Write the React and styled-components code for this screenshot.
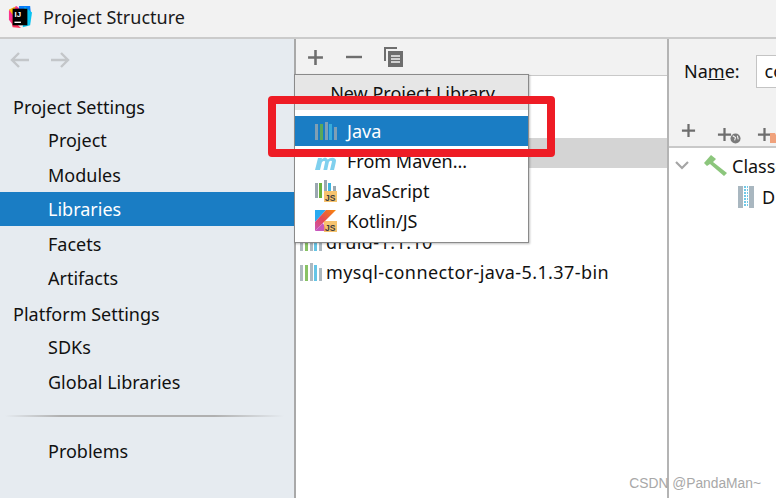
import React from "react";
import styled, {createGlobalStyle} from "styled-components";

const GlobalStyle = createGlobalStyle`
  html, body {
    margin: 0;
    padding: 0;
    background: #fff;
  }
  * {
    box-sizing: border-box;
  }
  svg {
    flex: none;
  }
`;

const sideItems = [
    {label: "Project Settings", head: true},
    {label: "Project"},
    {label: "Modules"},
    {label: "Libraries", active: true},
    {label: "Facets"},
    {label: "Artifacts"},
    {label: "Platform Settings", head: true},
    {label: "SDKs"},
    {label: "Global Libraries"},
];

function LibIcon({dim}) {
    return (
        <svg width="22" height="20" viewBox="0 0 22 20">
            <rect x="0" y="3" width="3" height="16" fill="#9aa7b0" opacity={dim ? 0.8 : 1}/>
            <rect x="5" y="3" width="3" height="16" fill="#6cb33f" opacity={dim ? 0.8 : 1}/>
            <rect x="10" y="1" width="3" height="18" fill="#9aa7b0" opacity={dim ? 0.8 : 1}/>
            <rect x="14" y="3" width="3" height="16" fill="#40b6e0" opacity={dim ? 0.8 : 1}/>
            <rect x="19" y="6" width="3" height="13" fill="#9aa7b0" opacity={dim ? 0.8 : 1}/>
        </svg>
    );
}

function JsBadge() {
    return (
        <>
            <rect x="9" y="11" width="13" height="11" fill="#f4af3d" opacity="0.75"/>
            <text x="10" y="20.5" fontSize="8.5" fontWeight="700" fontFamily="Liberation Sans, sans-serif" fill="#3c3c3c">JS</text>
        </>
    );
}

function JsLibIcon() {
    return (
        <svg width="22" height="22" viewBox="0 0 22 22">
            <rect x="0" y="3" width="3" height="15" fill="#9aa7b0"/>
            <rect x="4" y="3" width="3" height="15" fill="#6cb33f"/>
            <rect x="9" y="0" width="3" height="11" fill="#9aa7b0"/>
            <rect x="13" y="3" width="3" height="8" fill="#40b6e0"/>
            <rect x="18" y="6" width="3" height="5" fill="#9aa7b0"/>
            <JsBadge/>
        </svg>
    );
}

function KotlinIcon() {
    return (
        <svg width="22" height="22" viewBox="0 0 22 22">
            <defs>
                <linearGradient id="kot" x1="0" y1="1" x2="1" y2="0">
                    <stop offset="0" stopColor="#c757bc"/>
                    <stop offset="0.45" stopColor="#e44857"/>
                    <stop offset="1" stopColor="#f88909"/>
                </linearGradient>
            </defs>
            <path d="M0 0H11L0 12Z" fill="#29a9f0"/>
            <path d="M11 0H21L0 21V12Z" fill="url(#kot)"/>
            <path d="M0 21L8 13L12 21Z" fill="#c757bc"/>
            <JsBadge/>
        </svg>
    );
}

function MavenIcon() {
    return (
        <svg width="22" height="20" viewBox="0 0 22 20">
            <path
                d="M0 19L3 7H7L6.6 8.6C8.4 6.6 11.6 6 12.6 8.6C14.6 6.4 20.6 5.4 21 9.6C21 11 20 15 19 19H15L17 10.6C17 9.4 14.6 9.6 13.8 11.4L12.2 19H8.4L10.2 10.6C10 9.4 7.6 9.8 6.8 11.4L5 19Z"
                fill="#7fd0ee"
            />
        </svg>
    );
}

function Plus({size = 16}) {
    return (
        <svg width={size} height={size} viewBox="0 0 16 16">
            <path d="M8 1V15M1 8H15" stroke="#6e6e6e" strokeWidth="2.4"/>
        </svg>
    );
}

function Minus() {
    return (
        <svg width="16" height="16" viewBox="0 0 16 16">
            <path d="M0 8H16" stroke="#6e6e6e" strokeWidth="2.4"/>
        </svg>
    );
}

function CopyIcon() {
    return (
        <svg width="19" height="20" viewBox="0 0 19 20">
            <path d="M1 14V1H13" stroke="#6e6e6e" strokeWidth="2" fill="none"/>
            <rect x="4" y="4" width="15" height="16" fill="#6e6e6e"/>
            <path d="M7 9H16M7 12H16M7 15H16" stroke="#f2f2f2" strokeWidth="1.4"/>
        </svg>
    );
}

function ArrowIcon({right}) {
    return (
        <svg width="20" height="16" viewBox="0 0 20 16">
            <path
                d={right ? "M1 8H18M11 1L18 8L11 15" : "M19 8H2M9 1L2 8L9 15"}
                stroke="#c3c6c9" strokeWidth="2.4" fill="none"
            />
        </svg>
    );
}

function WebPlus() {
    return (
        <IconSlot>
            <Plus size={15}/>
            <Overlay>
                <svg width="11" height="11" viewBox="0 0 12 12">
                    <circle cx="6" cy="6" r="5.5" fill="#7a7a7a"/>
                    <path d="M3 3L6 5L5 8M8 3L9 7" stroke="#f2f2f2" strokeWidth="1.2" fill="none"/>
                </svg>
            </Overlay>
        </IconSlot>
    );
}

function FolderPlus() {
    return (
        <IconSlot>
            <Plus size={15}/>
            <Overlay>
                <svg width="12" height="10" viewBox="0 0 12 10">
                    <path d="M0 0H5L6 2H12V10H0Z" fill="#f0a27c"/>
                </svg>
            </Overlay>
        </IconSlot>
    );
}

function HammerIcon() {
    return (
        <svg width="24" height="22" viewBox="0 0 24 22">
            <path d="M0 8L7 0L12 4L9 7L23 18L20 21L6 9L3 11Z" fill="#8cc67c"/>
        </svg>
    );
}

function ChevronIcon() {
    return (
        <svg width="14" height="9" viewBox="0 0 14 9">
            <path d="M1 1L7 7L13 1" stroke="#a5a5a5" strokeWidth="2.2" fill="none"/>
        </svg>
    );
}

function JarIcon() {
    return (
        <svg width="16" height="22" viewBox="0 0 16 22">
            <rect x="0" y="0" width="5" height="22" fill="#a9b7c0"/>
            <rect x="11" y="0" width="5" height="22" fill="#a9b7c0"/>
            <path d="M6 1H10M6 4H10M6 7H10M6 10H10M6 13H10M6 16H10M6 19H10" stroke="#40b6e0" strokeWidth="1.6" strokeDasharray="2 1"/>
        </svg>
    );
}

function IdeaLogo() {
    return (
        <svg width="24" height="24" viewBox="0 0 26 26">
            <path d="M1 6L9 1L14 5L4 20L1 16Z" fill="#fc318c"/>
            <path d="M12 1H24L25 12L20 20L12 8Z" fill="#087cfa"/>
            <path d="M18 2L26 8L24 22L16 24Z" fill="#07c3f2"/>
            <path d="M3 14L14 25L5 24Z" fill="#fe315d"/>
            <path d="M1 5L8 2L6 12Z" fill="#fdb60d"/>
            <rect x="5" y="4" width="16" height="18" fill="#000"/>
            <text x="7" y="13" fontSize="8.5" fontWeight="700" fontFamily="Liberation Sans, sans-serif" fill="#fff">IJ</text>
            <rect x="7" y="18" width="7" height="1.5" fill="#fff"/>
        </svg>
    );
}

function App() {
    return (
        <Page>
            <GlobalStyle/>
            <TitleBar>
                <IdeaLogo/>
                <Title>Project Structure</Title>
            </TitleBar>
            <Body>
                <Sidebar>
                    <NavArrows>
                        <ArrowIcon/>
                        <ArrowIcon right/>
                    </NavArrows>
                    <SideList>
                        {sideItems.map((item) => (
                            <SideRow key={item.label} $head={item.head} $active={item.active}>
                                {item.label}
                            </SideRow>
                        ))}
                    </SideList>
                    <SideDivider/>
                    <SideRow>Problems</SideRow>
                </Sidebar>

                <Middle>
                    <Toolbar>
                        <Plus size={17}/>
                        <Minus/>
                        <CopyIcon/>
                    </Toolbar>
                    <LibList>
                        <LibRow/>
                        <LibRow/>
                        <LibRow $selected/>
                        <LibRow/>
                        <LibRow/>
                        <LibRow><LibIcon dim/>druid-1.1.10</LibRow>
                        <LibRow><LibIcon dim/>mysql-connector-java-5.1.37-bin</LibRow>
                    </LibList>
                </Middle>

                <Detail>
                    <NameRow>
                        <NameLabel>Na<u>m</u>e:</NameLabel>
                        <NameInput>co</NameInput>
                    </NameRow>
                    <DetailTools>
                        <Plus size={15}/>
                        <WebPlus/>
                        <FolderPlus/>
                    </DetailTools>
                    <Tree>
                        <TreeRow>
                            <ChevronIcon/>
                            <HammerSlot><HammerIcon/></HammerSlot>
                            Classes
                        </TreeRow>
                        <TreeChild>
                            <JarIcon/>
                            D
                        </TreeChild>
                    </Tree>
                </Detail>
            </Body>

            <Popup>
                <PopupHead>New Project Library</PopupHead>
                <PopupItems>
                    <PopupItem $active><LibIcon dim/>Java</PopupItem>
                    <PopupItem><MavenIcon/>From Maven...</PopupItem>
                    <PopupItem><JsLibIcon/>JavaScript</PopupItem>
                    <PopupItem><KotlinIcon/>Kotlin/JS</PopupItem>
                </PopupItems>
            </Popup>
            <RedMark/>
            <Watermark>CSDN @PandaMan~</Watermark>
        </Page>
    );
}

export default App;

const Page = styled.div`
  position: relative;
  width: 776px;
  height: 498px;
  overflow: hidden;
  display: flex;
  flex-direction: column;
  background: #fff;
  color: #111;
  font-family: "Noto Sans", "Open Sans", sans-serif;
  font-size: 18px;
`;

const TitleBar = styled.div`
  height: 39px;
  flex: none;
  display: flex;
  align-items: center;
  gap: 11px;
  padding: 0 0 4px 8px;
  background: #f2f2f2;
  border-bottom: 2px solid #cbcbcb;
`;

const Title = styled.span`
  font-size: 18px;
  color: #1a1a1a;
`;

const Body = styled.div`
  flex: 1;
  display: flex;
  min-height: 0;
`;

const Sidebar = styled.div`
  width: 296px;
  flex: none;
  display: flex;
  flex-direction: column;
  background: #e6ebf0;
  border-right: 2px solid #a9a9a9;
`;

const NavArrows = styled.div`
  height: 49.4px;
  flex: none;
  display: flex;
  align-items: center;
  gap: 20px;
  padding: 0 0 8px 10px;
`;

const SideList = styled.div`
  display: flex;
  flex-direction: column;
`;

const SideRow = styled.div`
  height: 34.5px;
  display: flex;
  align-items: center;
  padding-left: ${(p) => (p.$head ? "13px" : "48px")};
  padding-top: ${(p) => (p.$head ? "3px" : "0")};
  background: ${(p) => (p.$active ? "#1a7dc4" : "transparent")};
  color: ${(p) => (p.$active ? "#fff" : "#111")};
`;

const SideDivider = styled.div`
  height: 2px;
  flex: none;
  margin: 16.6px 10px 16px 5px;
  background: linear-gradient(90deg, #e6ebf0, #b0b0b0 20%, #b0b0b0 75%, #e6ebf0);
`;

const Middle = styled.div`
  width: 373px;
  flex: none;
  display: flex;
  flex-direction: column;
  border-right: 2px solid #b4b4b4;
`;

const Toolbar = styled.div`
  height: 37px;
  flex: none;
  display: flex;
  align-items: center;
  gap: 22px;
  padding-left: 11px;
  background: #f2f2f2;
  border-bottom: 1px solid #c9c9c9;
`;

const LibList = styled.div`
  padding-top: 2px;
  display: flex;
  flex-direction: column;
`;

const LibRow = styled.div`
  height: 30px;
  display: flex;
  align-items: center;
  gap: 4px;
  padding: 0 0 2px 4px;
  letter-spacing: 0.4px;
  background: ${(p) => (p.$selected ? "#d4d4d4" : "transparent")};
`;

const Detail = styled.div`
  flex: 1;
  min-width: 0;
  display: flex;
  flex-direction: column;
`;

const NameRow = styled.div`
  height: 70px;
  flex: none;
  display: flex;
  align-items: center;
  gap: 16px;
  padding: 0 0 6px 15px;
  background: #f2f2f2;
`;

const NameLabel = styled.span`
  white-space: nowrap;
`;

const NameInput = styled.div`
  width: 60px;
  height: 33px;
  flex: none;
  display: flex;
  align-items: center;
  padding-left: 8px;
  background: #fff;
  border: 1px solid #c4c4c4;
`;

const DetailTools = styled.div`
  height: 39px;
  flex: none;
  display: flex;
  align-items: center;
  gap: 21px;
  padding: 6px 0 0 12px;
  background: #f2f2f2;
  border-bottom: 2px solid #c9c9c9;
`;

const IconSlot = styled.span`
  position: relative;
  width: 19px;
  height: 15px;
  flex: none;
  display: inline-block;
`;

const Overlay = styled.span`
  position: absolute;
  left: 13px;
  top: 10px;
  line-height: 0;
`;

const Tree = styled.div`
  display: flex;
  flex-direction: column;
`;

const TreeRow = styled.div`
  height: 35px;
  display: flex;
  align-items: center;
  padding-left: 6px;
  white-space: nowrap;
`;

const HammerSlot = styled.span`
  flex: none;
  display: flex;
  margin: 0 4px 0 15px;
`;

const TreeChild = styled.div`
  height: 27px;
  display: flex;
  align-items: center;
  gap: 8px;
  padding-left: 69px;
`;

const Popup = styled.div`
  position: absolute;
  left: 294px;
  top: 74px;
  width: 235px;
  height: 169px;
  background: #fff;
  border: 1px solid #8a8a8a;
  box-shadow: 1px 1px 2px rgba(0, 0, 0, 0.25);
`;

const PopupHead = styled.div`
  height: 35px;
  display: flex;
  align-items: center;
  justify-content: center;
  padding: 0 6px 0 8px;
  background: #e6e6e6;
`;

const PopupItems = styled.div`
  padding-top: 6px;
  display: flex;
  flex-direction: column;
`;

const PopupItem = styled.div`
  height: 30px;
  display: flex;
  align-items: center;
  gap: 10px;
  padding-left: 20px;
  background: ${(p) => (p.$active ? "#1a7dc4" : "transparent")};
  color: ${(p) => (p.$active ? "#fff" : "#111")};
`;

const RedMark = styled.div`
  position: absolute;
  left: 268px;
  top: 96px;
  width: 287px;
  height: 61px;
  border: 8px solid #ee1c25;
  border-radius: 4px;
`;

const Watermark = styled.div`
  position: absolute;
  right: 15px;
  bottom: 7px;
  font-family: "Liberation Sans", sans-serif;
  font-size: 13.8px;
  color: #a8a8a8;
  white-space: nowrap;
`;
